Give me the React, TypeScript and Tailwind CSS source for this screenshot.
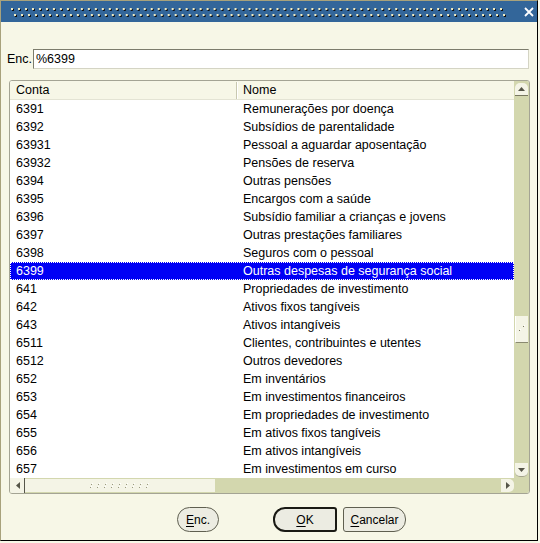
import type { ReactNode } from "react";

const rows: [string, string][] = [
  ["6391", "Remunerações por doença"],
  ["6392", "Subsídios de parentalidade"],
  ["63931", "Pessoal a aguardar aposentação"],
  ["63932", "Pensões de reserva"],
  ["6394", "Outras pensões"],
  ["6395", "Encargos com a saúde"],
  ["6396", "Subsídio familiar a crianças e jovens"],
  ["6397", "Outras prestações familiares"],
  ["6398", "Seguros com o pessoal"],
  ["6399", "Outras despesas de segurança social"],
  ["641", "Propriedades de investimento"],
  ["642", "Ativos fixos tangíveis"],
  ["643", "Ativos intangíveis"],
  ["6511", "Clientes, contribuintes e utentes"],
  ["6512", "Outros devedores"],
  ["652", "Em inventários"],
  ["653", "Em investimentos financeiros"],
  ["654", "Em propriedades de investimento"],
  ["655", "Em ativos fixos tangíveis"],
  ["656", "Em ativos intangíveis"],
  ["657", "Em investimentos em curso"],
];

const SELECTED = "6399";

function TitleDots() {
  return (
    <svg className="h-[21px] flex-1" viewBox="0 0 496 21" preserveAspectRatio="none">
      <defs>
        <pattern id="dots" width="7" height="21" patternUnits="userSpaceOnUse">
          <rect x="1" y="8" width="2" height="2" fill="#0d0d0d" />
          <rect x="0" y="7" width="2" height="2" fill="#f0ebc2" />
          <rect x="4" y="14" width="2" height="2" fill="#0d0d0d" />
          <rect x="3" y="13" width="2" height="2" fill="#f0ebc2" />
        </pattern>
      </defs>
      <rect x="0" y="0" width="496" height="21" fill="url(#dots)" />
    </svg>
  );
}

function Arrow({ dir }: { dir: "up" | "down" | "left" | "right" }) {
  const pts = {
    up: "0,4 7,4 3.5,0",
    down: "0,0 7,0 3.5,4",
    left: "4,0 4,7 0,3.5",
    right: "0,0 0,7 4,3.5",
  }[dir];
  const vertical = dir === "up" || dir === "down";
  return (
    <svg
      width={vertical ? 7 : 4}
      height={vertical ? 4 : 7}
      viewBox={vertical ? "0 0 7 4" : "0 0 4 7"}
    >
      <polygon points={pts} fill="#555548" />
    </svg>
  );
}

function Btn({
  children,
  className,
}: {
  children: ReactNode;
  className: string;
}) {
  return (
    <button
      className={
        "flex h-[25px] items-center justify-center bg-[#ecece2] text-[12px] text-black " +
        className
      }
    >
      {children}
    </button>
  );
}

export default function App() {
  return (
    <div className="h-[543px] w-[540px] bg-[#f7f7e7] font-['Liberation_Sans',Arial,sans-serif] text-[12px] text-black">
      <div className="flex h-[541px] w-[538px] flex-col border border-[#a8a27c] border-b-black border-r-black">
        {/* title bar */}
        <div className="flex h-[21px] items-center bg-[#33669a] pl-[10px] pr-[3px]">
          <TitleDots />
          <svg className="ml-[18px]" width="10" height="10" viewBox="0 0 10 10">
            <path d="M1 1 L9 9 M9 1 L1 9" stroke="#fff" strokeWidth="1.8" />
          </svg>
        </div>

        {/* search */}
        <div className="mt-[27px] flex h-[20px] items-center leading-[15px]">
          <span className="w-[32px] pl-[6px] pt-[1px] text-[12.5px]">Enc.</span>
          <div className="flex h-[20px] w-[496px] items-center border border-[#7c7c6c] border-b-[#d4d4c4] border-r-[#d4d4c4] bg-white pl-[2px] pt-[1px] text-[12.5px]">
            %6399
          </div>
        </div>

        {/* list */}
        <div className="ml-[8px] mt-[11px] flex h-[414px] w-[521px] flex-col overflow-hidden rounded-[3px] border border-[#a4a494] bg-white text-[12.5px] leading-[15px]">
          <div className="flex h-[397px]">
            <div className="flex w-[504px] flex-col">
              <div className="flex h-[19px] items-center border-b border-[#e4e4d4] bg-[#f7f7e7] pt-[1px]">
                <div className="flex h-full w-[227px] items-center border-r border-[#c8c8b0] pl-[6px]">
                  Conta
                </div>
                <div className="flex h-full flex-1 items-center border-l border-white pl-[5px]">
                  Nome
                </div>
              </div>
              {rows.map(([code, name]) => {
                const sel = code === SELECTED;
                return (
                  <div
                    key={code}
                    className={
                      sel
                        ? "flex h-[18px] items-center border border-dotted border-white bg-[#0000f5] pt-[1px] text-white"
                        : "flex h-[18px] items-center pt-[1px]"
                    }
                  >
                    <div className={sel ? "w-[226px] pl-[5px]" : "w-[227px] pl-[6px]"}>{code}</div>
                    <div className="pl-[6px]">{name}</div>
                  </div>
                );
              })}
            </div>

            {/* vertical scrollbar */}
            <div className="flex w-[15px] flex-col bg-[#d3d7ae] pl-[1px]">
              <div className="mt-[2px] flex h-[13px] w-[13px] items-center justify-center rounded-t-[5px] border-b border-[#77775f] bg-[#f4f4e6]">
                <Arrow dir="up" />
              </div>
              <div className="mt-[220px] flex h-[27px] w-[13px] items-center justify-center border-b border-[#8a8a70] border-l border-l-white bg-[#f4f4e6]">
                <svg width="8" height="8" viewBox="0 0 8 8">
                  <rect x="5" y="1" width="1" height="1" fill="#77775f" />
                  <rect x="6" y="0" width="1" height="1" fill="#fff" />
                  <rect x="1" y="5" width="1" height="1" fill="#77775f" />
                  <rect x="2" y="4" width="1" height="1" fill="#fff" />
                </svg>
              </div>
              <div className="flex-1" />
              <div className="mb-[1px] flex h-[14px] w-[13px] items-center justify-center rounded-b-[5px] border-b border-[#a4a48c] bg-[#f4f4e6]">
                <Arrow dir="down" />
              </div>
            </div>
          </div>

          {/* horizontal scrollbar */}
          <div className="flex h-[15px] bg-[#d3d7ae]">
            <div className="flex w-[15px] items-center justify-center border-r border-[#55554a] bg-[#f4f4e6] pl-[2px]">
              <Arrow dir="left" />
            </div>
            <div className="flex w-[190px] items-center justify-center border-y border-[#d3d7ae] bg-[#f4f4e6]">
              <svg width="60" height="6" viewBox="0 0 60 6">
                {[0, 7, 14, 21, 28, 35, 42, 49, 56].map((x) => (
                  <g key={x}>
                    <rect x={x + 2} y="0" width="1" height="1" fill="#fff" />
                    <rect x={x + 1} y="1" width="1" height="1" fill="#9a9a80" />
                    <rect x={x + 1} y="3" width="1" height="1" fill="#fff" />
                    <rect x={x} y="4" width="1" height="1" fill="#9a9a80" />
                  </g>
                ))}
              </svg>
            </div>
            <div className="flex-1" />
            <div className="my-[1px] flex w-[13px] items-center justify-center rounded-r-[5px] bg-[#f4f4e6]">
              <Arrow dir="right" />
            </div>
            <div className="w-[15px] rounded-br-[3px]" />
          </div>
        </div>

        {/* buttons */}
        <div className="mt-[13px] flex pl-[176px]">
          <Btn className="w-[42px] rounded-full border border-[#5f5f50]">
            <span className="underline decoration-1 underline-offset-2">E</span>nc.
          </Btn>
          <Btn className="ml-[54px] w-[64px] rounded-l-[12px] rounded-r-[3px] border-2 border-[#1a1a14]">
            <span className="underline decoration-1 underline-offset-2">O</span>K
          </Btn>
          <Btn className="ml-[6px] w-[63px] rounded-l-[3px] rounded-r-[12px] border border-[#5f5f50]">
            <span className="underline decoration-1 underline-offset-2">C</span>ancelar
          </Btn>
        </div>
      </div>
    </div>
  );
}
